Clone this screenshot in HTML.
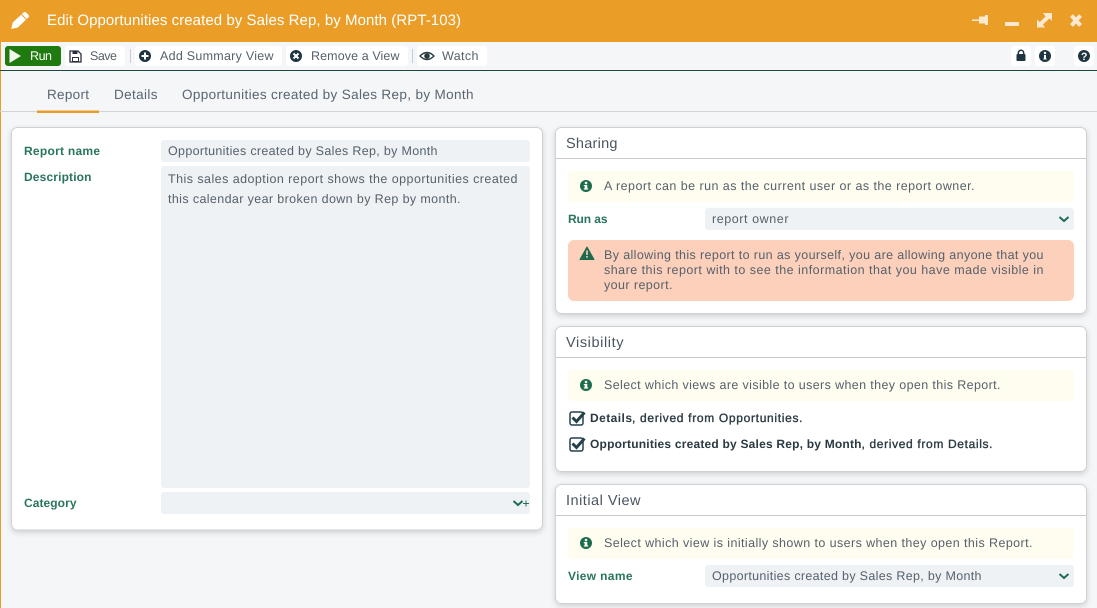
<!DOCTYPE html>
<html><head><meta charset="utf-8"><title>Edit Report</title>
<style>
html,body{margin:0;padding:0;width:1097px;height:608px;overflow:hidden;background:#f5f6f8}
svg{display:block;position:absolute;left:0;top:0}
text{font-family:"Liberation Sans",sans-serif;font-size:12.5px;fill:#56616b;text-rendering:geometricPrecision}
.l{font-weight:bold;fill:#2a7560;font-size:12px}
.h{font-size:14.5px;fill:#4a5560}
.t{font-size:13.5px;fill:#5a6570}
.bb{font-size:12px;fill:#2b3a42;font-weight:bold}
.bm{font-size:12px;fill:#2b3a42;stroke:#2b3a42;stroke-width:.35px}
.f{fill:#eff2f5}
.i{fill:#fffdf0}
</style></head><body>
<svg width="1097" height="608" viewBox="0 0 1097 608" xmlns="http://www.w3.org/2000/svg">
<defs>
<filter id="s" x="-5%" y="-5%" width="110%" height="112%"><feDropShadow dx="0" dy="2" stdDeviation="3" flood-color="#000" flood-opacity=".16"/></filter>
<g id="info"><circle cx="0" cy="0" r="6" fill="#1c6b4e"/><rect x="-1.3" y="-1" width="2.6" height="4.4" fill="#fffdf0"/><rect x="-2.2" y="-1" width="3" height="1.2" fill="#fffdf0"/><rect x="-2.2" y="2.4" width="4.4" height="1.2" fill="#fffdf0"/><circle cx="0" cy="-3" r="1.3" fill="#fffdf0"/></g>
<path id="chev" d="M-4.5-2 L0 2 L4.5-2" fill="none" stroke="#1f6b55" stroke-width="2"/>
<g id="chk"><rect x="1" y="2" width="13" height="13" rx="2" fill="#fff" stroke="#24404a" stroke-width="1.5"/><path d="M3.5 7.500 L7.500 11.500 L15.500 2.500" fill="none" stroke="#24404a" stroke-width="3"/></g>
</defs>

<rect x="0" y="0" width="1097" height="42" fill="#ea9d27"/>
<rect x="0" y="42" width="1" height="566" fill="#ea9d27"/>
<path d="M11.200 29 L12.800 22.500 L23.500 12.500 Q25 11.500 26.200 12.500 L28.500 15 Q29.500 16.500 28.300 17.500 L17.800 27.500 Z" fill="#fff"/>
<path d="M21.500 14.500 L26.700 19.700" stroke="#ea9d27" stroke-width="1"/>
<text x="47" y="25" textLength="414" lengthAdjust="spacing" style="font-size:15px;fill:#fff">Edit Opportunities created by Sales Rep, by Month (RPT-103)</text>

<g fill="#fde9cf">
<path d="M972 19.500 H979 V16.500 H985 V15 H988 V25 H985 V23.500 H979 V21 H972 Z"/>
<rect x="1005" y="22" width="14" height="4" rx="1"/>
<path d="M1037 27.500 V19.500 L1039.800 22 L1045.500 16.500 L1043 13 H1052 V21 L1049.500 18.500 L1043 24.500 L1045 27.500 Z"/>
</g>
<path d="M1071.500 15.500 L1080.500 25.500 M1080.500 15.500 L1071.500 25.500" stroke="#fde9cf" stroke-width="4" fill="none"/>

<rect x="0" y="70" width="1097" height="1" fill="#1c4a40"/>
<rect x="5" y="46" width="56" height="20" rx="3" fill="#1f7a0f"/>
<path d="M9.500 49 V63 L21 56 Z" fill="#f3f6ec"/>
<text x="30" y="60" textLength="22" lengthAdjust="spacing" style="fill:#fff;font-size:12.5px">Run</text>

<g fill="#fff">
<rect x="65" y="46" width="60" height="20" rx="3"/>
<rect x="135" y="46" width="147" height="20" rx="3"/>
<rect x="286" y="46" width="122" height="20" rx="3"/>
<rect x="417" y="46" width="70" height="20" rx="3"/>
<rect x="1011" y="46" width="20" height="20" rx="3"/>
<rect x="1035" y="46" width="20" height="20" rx="3"/>
<rect x="1074" y="46" width="20" height="20" rx="3"/>
</g>
<rect x="130" y="49" width="1" height="14" fill="#c9ccd0"/>
<rect x="412" y="49" width="1" height="14" fill="#c9ccd0"/>

<path d="M70 51 H78 L81 54 V62 H70 Z" fill="#fff" stroke="#2b3040" stroke-width="1.300"/>
<rect x="72.500" y="51" width="5" height="3" fill="#2b3040"/>
<rect x="72.500" y="57.500" width="6" height="4" fill="none" stroke="#2b3040" stroke-width="1"/>
<text x="90" y="60" textLength="27" lengthAdjust="spacing">Save</text>

<circle cx="145" cy="56" r="6" fill="#1f3540"/><path d="M145 52.500 V59.500 M141.500 56 H148.500" stroke="#fff" stroke-width="2"/>
<text x="160" y="60" textLength="113.500" lengthAdjust="spacing">Add Summary View</text>

<circle cx="296" cy="56" r="6" fill="#1f3540"/><path d="M293.500 53.500 L298.500 58.500 M298.500 53.500 L293.500 58.500" stroke="#fff" stroke-width="2"/>
<text x="311" y="60" textLength="88.500" lengthAdjust="spacing">Remove a View</text>

<path d="M420 56 Q427 49 434 56 Q427 63 420 56 Z" fill="none" stroke="#2b3a42" stroke-width="1.300"/><circle cx="427" cy="56" r="2.800" fill="#2b3a42"/>
<text x="442" y="60" textLength="36.500" lengthAdjust="spacing">Watch</text>

<rect x="1016.500" y="54" width="9" height="7" rx="1" fill="#1f3540"/>
<path d="M1018.300 54.500 V53 a2.700 2.700 0 0 1 5.400 0 V54.500" fill="none" stroke="#1f3540" stroke-width="1.500"/>
<circle cx="1045" cy="56" r="6" fill="#1f3540"/><rect x="1044" y="55" width="2" height="4" fill="#fff"/><circle cx="1045" cy="53" r="1.200" fill="#fff"/><rect x="1043.300" y="58.500" width="3.400" height="1" fill="#fff"/>
<circle cx="1084" cy="56" r="6" fill="#1f3540"/>
<text x="1081" y="60" style="font-size:10.500px;font-weight:bold;fill:#fff">?</text>

<rect x="0" y="111" width="1097" height="1" fill="#d2d4d6"/>
<rect x="37" y="110.500" width="62" height="2.500" fill="#ea9d27"/>
<text x="47" y="99" class="t" textLength="42" lengthAdjust="spacing">Report</text>
<text x="114" y="99" class="t" textLength="43.500" lengthAdjust="spacing">Details</text>
<text x="182" y="99" class="t" textLength="291.500" lengthAdjust="spacing">Opportunities created by Sales Rep, by Month</text>

<rect x="11.500" y="127.500" width="531" height="402.500" rx="6" fill="#fff" stroke="#cfd1d3" stroke-width="1" filter="url(#s)"/>
<text x="24" y="155" class="l" textLength="76" lengthAdjust="spacing">Report name</text>
<text x="24" y="181" class="l" textLength="67.500" lengthAdjust="spacing">Description</text>
<text x="24" y="507" class="l" textLength="52.500" lengthAdjust="spacing">Category</text>
<rect x="161" y="140" width="369" height="22" rx="3" class="f"/>
<rect x="161" y="166" width="369" height="322" rx="3" class="f"/>
<rect x="161" y="492" width="369" height="22" rx="3" class="f"/>
<text x="168" y="155" textLength="269.500" lengthAdjust="spacing">Opportunities created by Sales Rep, by Month</text>
<text x="168" y="183" textLength="349.500" lengthAdjust="spacing">This sales adoption report shows the opportunities created</text>
<text x="168" y="203" textLength="292.500" lengthAdjust="spacing">this calendar year broken down by Rep by month.</text>
<use href="#chev" x="518" y="503"/>
<path d="M523 503.500 H529 M526 500.500 V506.500" stroke="#2a6f5c" stroke-width="1"/>

<rect x="555.500" y="127.500" width="531" height="186" rx="6" fill="#fff" stroke="#cfd1d3" filter="url(#s)"/>
<rect x="556" y="158" width="530" height="1" fill="#c8cacc"/>
<text x="566" y="148" class="h" textLength="51.500" lengthAdjust="spacing">Sharing</text>
<rect x="568" y="171" width="506" height="31" rx="4" class="i"/>
<use href="#info" x="586" y="186"/>
<text x="604" y="190" textLength="370.500" lengthAdjust="spacing">A report can be run as the current user or as the report owner.</text>
<text x="568" y="223" class="l" textLength="39.500" lengthAdjust="spacing">Run as</text>
<rect x="705" y="208" width="369" height="22" rx="3" class="f"/>
<text x="712" y="223" textLength="76.500" lengthAdjust="spacing">report owner</text>
<use href="#chev" x="1064" y="219"/>
<rect x="568" y="240" width="506" height="61" rx="6" fill="#fcd0bb"/>
<path d="M587 247 L594 259.500 H580 Z" fill="#1c6b4e" stroke="#1c6b4e" stroke-width="1" stroke-linejoin="round"/>
<rect x="586.200" y="250.500" width="1.600" height="4.500" fill="#fcd0bb"/><rect x="586.200" y="256" width="1.600" height="1.700" fill="#fcd0bb"/>
<text x="604" y="259" textLength="439.500" lengthAdjust="spacing">By allowing this report to run as yourself, you are allowing anyone that you</text>
<text x="604" y="274" textLength="439.500" lengthAdjust="spacing">share this report with to see the information that you have made visible in</text>
<text x="604" y="289" textLength="68.500" lengthAdjust="spacing">your report.</text>

<rect x="555.500" y="326.500" width="531" height="145" rx="6" fill="#fff" stroke="#cfd1d3" filter="url(#s)"/>
<rect x="556" y="357" width="530" height="1" fill="#c8cacc"/>
<text x="566" y="347" class="h" textLength="57.500" lengthAdjust="spacing">Visibility</text>
<rect x="568" y="370" width="506" height="31" rx="4" class="i"/>
<use href="#info" x="586" y="385"/>
<text x="604" y="389" textLength="396.500" lengthAdjust="spacing">Select which views are visible to users when they open this Report.</text>
<use href="#chk" x="569" y="410"/>
<text x="590" y="422" class="bb" textLength="42" lengthAdjust="spacing">Details</text>
<text x="632" y="422" class="bm" textLength="170.500" lengthAdjust="spacing">, derived from Opportunities.</text>
<use href="#chk" x="569" y="436"/>
<text x="590" y="448" class="bb" textLength="271.500" lengthAdjust="spacing">Opportunities created by Sales Rep, by Month</text>
<text x="861.500" y="448" class="bm" textLength="131" lengthAdjust="spacing">, derived from Details.</text>

<rect x="555.500" y="484.500" width="531" height="119" rx="6" fill="#fff" stroke="#cfd1d3" filter="url(#s)"/>
<rect x="556" y="515" width="530" height="1" fill="#c8cacc"/>
<text x="566" y="505" class="h" textLength="74.500" lengthAdjust="spacing">Initial View</text>
<rect x="568" y="528" width="506" height="31" rx="4" class="i"/>
<use href="#info" x="586" y="543"/>
<text x="604" y="547" textLength="428.500" lengthAdjust="spacing">Select which view is initially shown to users when they open this Report.</text>
<text x="568" y="580" class="l" textLength="64.500" lengthAdjust="spacing">View name</text>
<rect x="705" y="565" width="369" height="22" rx="3" class="f"/>
<text x="712" y="580" textLength="269.500" lengthAdjust="spacing">Opportunities created by Sales Rep, by Month</text>
<use href="#chev" x="1064" y="576"/>
</svg>
</body></html>
